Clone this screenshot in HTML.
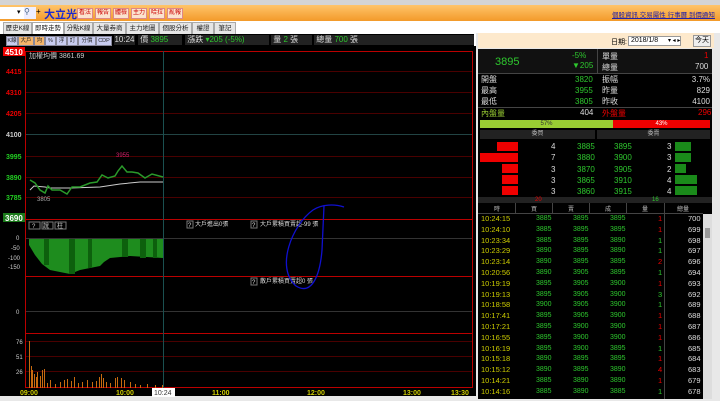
<!DOCTYPE html>
<html><head><meta charset="utf-8"><style>
*{margin:0;padding:0;box-sizing:border-box}
body{width:720px;height:401px;overflow:hidden;background:#fff;font-family:"Liberation Sans","Noto Sans CJK TC",sans-serif;font-size:8px;position:relative}
.a{position:absolute;white-space:nowrap}
.btn{position:absolute;top:8px;height:11px;width:16px;background:#fbe3cf;border:1px solid #d88;color:#c00;font-size:6px;text-align:center;line-height:9px;overflow:hidden}
.tab{position:absolute;top:22px;height:13px;background:#e6e6e6;border:1px solid #aaa;font-size:6.5px;text-align:center;line-height:11px;color:#222;overflow:hidden}
.tb{position:absolute;top:36px;height:10px;background:#c8ccf0;border:1px solid #889;font-size:5.5px;line-height:8px;text-align:center;color:#222;overflow:hidden}
.g{color:#2ec82e}.r{color:#e00}.w{color:#ddd}.y{color:#cccc00}
</style></head><body>
<div class="a" style="left:0;top:0;width:720px;height:5px;background:#d4d4d4"></div>
<div class="a" style="left:0;top:5px;width:720px;height:16px;background:linear-gradient(#ffc46a,#f39a2a)"></div>
<div class="a" style="left:0;top:7px;width:24px;height:12px;background:#fff"></div>
<div class="a" style="left:17px;top:8px;font-size:7px">▾</div>
<div class="a" style="left:24px;top:7px;width:12px;height:12px;background:#eef;color:#468;font-size:8px">⚲</div>
<div class="a" style="left:36px;top:7px;font-size:8px">+</div>
<div class="a" style="left:44px;top:6px;font-size:11px;font-weight:bold;color:#1a2ad0">大立光</div>
<div class="btn" style="left:77px">看法</div><div class="btn" style="left:95px">報告</div><div class="btn" style="left:113px">體檢</div><div class="btn" style="left:131px">主力</div><div class="btn" style="left:149px">哈拉</div><div class="btn" style="left:167px">亂報</div>
<div class="a" style="left:612px;top:9px;font-size:6.5px;color:#22a;text-decoration:underline">個股資訊 交易屬性 行事曆 到價通知</div>
<div class="tab" style="left:3px;width:29px">歷史K線</div><div class="tab" style="left:32px;width:32px;background:#fff">即時走勢</div><div class="tab" style="left:64px;width:29px">分點K線</div><div class="tab" style="left:93px;width:33px">大量券商</div><div class="tab" style="left:126px;width:33px">主力地圖</div><div class="tab" style="left:159px;width:33px">個股分析</div><div class="tab" style="left:192px;width:22px">權證</div><div class="tab" style="left:214px;width:22px">筆記</div>
<div class="a" style="left:0;top:34px;width:474px;height:12px;background:#000"></div>
<div class="tb" style="left:6px;width:12px">K線</div><div class="tb" style="left:18px;width:16px;background:#f5b56a">大戶</div><div class="tb" style="left:34px;width:11px;background:#f5b56a">均</div><div class="tb" style="left:45px;width:11px">%</div><div class="tb" style="left:56px;width:11px">浮</div><div class="tb" style="left:67px;width:11px">訂</div><div class="tb" style="left:78px;width:18px">分價</div><div class="tb" style="left:96px;width:16px">CDP</div>
<div class="a" style="left:114px;top:35px;width:21px;height:10px;background:#222;color:#ddd;font-size:8px;line-height:10px;text-align:center">10:24</div>
<div class="a" style="left:138px;top:35px;width:44px;height:10px;background:#222;color:#ddd;font-size:8px;line-height:10px">&nbsp;價 <span class="g">3895</span></div>
<div class="a" style="left:185px;top:35px;width:84px;height:10px;background:#222;color:#ddd;font-size:8px;line-height:10px">&nbsp;漲跌 <span class="g">▾205 (-5%)</span></div>
<div class="a" style="left:271px;top:35px;width:41px;height:10px;background:#222;color:#ddd;font-size:8px;line-height:10px">&nbsp;量 <span class="g">2</span> 張</div>
<div class="a" style="left:314px;top:35px;width:160px;height:10px;background:#222;color:#ddd;font-size:8px;line-height:10px">&nbsp;總量 <span class="g">700</span> 張</div>
<svg class="a" style="left:0;top:46px" width="476" height="355" viewBox="0 46 476 355">
<rect x="0" y="46" width="476" height="355" fill="#000"/>
<rect x="0" y="396" width="476" height="5" fill="#e8e8e8"/>
<g stroke="#4a0000" stroke-width="1"><line x1="25" y1="71.5" x2="473" y2="71.5"/><line x1="25" y1="92.5" x2="473" y2="92.5"/><line x1="25" y1="113.5" x2="473" y2="113.5"/><line x1="25" y1="156.5" x2="473" y2="156.5"/><line x1="25" y1="177.5" x2="473" y2="177.5"/><line x1="25" y1="197.5" x2="473" y2="197.5"/><line x1="25" y1="341.5" x2="473" y2="341.5"/><line x1="25" y1="356.5" x2="473" y2="356.5"/><line x1="25" y1="371.5" x2="473" y2="371.5"/></g>
<line x1="25" y1="134.5" x2="473" y2="134.5" stroke="#244" />
<line x1="25" y1="238.5" x2="473" y2="238.5" stroke="#333"/>
<line x1="25" y1="311.5" x2="473" y2="311.5" stroke="#333"/>
<g stroke="#b00" fill="none"><rect x="25.5" y="51.5" width="447" height="336"/><line x1="25" y1="219.5" x2="473" y2="219.5"/><line x1="25" y1="276.5" x2="473" y2="276.5"/><line x1="25" y1="333.5" x2="473" y2="333.5"/></g>
<line x1="163.5" y1="51" x2="163.5" y2="388" stroke="#1a5050"/>
<rect x="3" y="47" width="22" height="9" fill="#e00"/><text x="5" y="55" fill="#fff" font-size="8" font-weight="bold">4510</text>
<g font-size="7" font-weight="bold" fill="#e00"><text x="6" y="74">4415</text><text x="6" y="95">4310</text><text x="6" y="116">4205</text></g>
<text x="6" y="137" font-size="7" font-weight="bold" fill="#ccc">4100</text>
<g font-size="7" font-weight="bold" fill="#2c2"><text x="6" y="159">3995</text><text x="6" y="180">3890</text><text x="6" y="200">3785</text></g>
<rect x="3" y="213" width="22" height="9" fill="#1a7a1a"/><text x="5" y="221" fill="#fff" font-size="8" font-weight="bold">3690</text>
<text x="29" y="58" fill="#ccc" font-size="7">加權均價 3861.69</text>
<text x="116" y="157" fill="#d0206a" font-size="6">3955</text><text x="37" y="201" fill="#aaa" font-size="6">3805</text>
<polyline fill="none" stroke="#ccc" stroke-width="1" points="30,190 34,186 45,187 50,188 70,188 100,187 120,184 140,182 163,182"/>
<polyline fill="none" stroke="#2a9a2a" stroke-width="1.5" points="30,180 35,183 40,190 45,193 48,186 52,190 60,190 67,194 72,187 80,187 90,183 97,182 102,175 108,178 115,176 118,171 122,166 127,172 132,172 138,173 145,178 152,174 163,177"/>
<g fill="#000" stroke="#777"><rect x="29" y="222" width="11" height="7"/><rect x="42" y="222" width="11" height="7"/><rect x="55" y="222" width="11" height="7"/></g>
<g font-size="6" fill="#ccc"><text x="32" y="228">?</text><text x="43" y="228">說</text><text x="57" y="228">柱</text></g>
<g font-size="6" fill="#ccc"><text x="16" y="240">0</text><text x="11" y="250">-50</text><text x="8" y="260">-100</text><text x="8" y="269">-150</text><text x="16" y="314">0</text><text x="16" y="344">76</text><text x="16" y="359">51</text><text x="16" y="374">26</text></g>
<path d="M29,239 L29,245 L35,255 L42,264 L50,270 L60,272 L70,274 L80,270 L100,266 L104,262 L110,258 L130,256 L163,258 L163,239Z" fill="#1e8c1e"/>
<g fill="#0d600d"><rect x="44" y="239" width="5" height="26"/><rect x="69" y="239" width="6" height="35"/><rect x="88" y="239" width="4" height="29"/><rect x="122" y="239" width="6" height="18"/><rect x="140" y="239" width="6" height="19"/><rect x="153" y="239" width="4" height="19"/></g>
<g fill="#000" stroke="#777"><rect x="187" y="221" width="6" height="7"/><rect x="251" y="221" width="6" height="7"/><rect x="251" y="278" width="6" height="7"/></g>
<g font-size="6" fill="#ddd"><text x="188" y="227">?</text><text x="252" y="227">?</text><text x="252" y="284">?</text><text x="195" y="226">大戶進出0張</text><text x="260" y="226">大戶累積買賣超-99 張</text><text x="260" y="283">散戶累積買賣超0 張</text></g>
<path d="M344,207 C335,204 322,204 313,210 C292,225 275,268 296,286 C312,296 320,275 322,250 L324,206" fill="none" stroke="#1010d0" stroke-width="1.3"/>
<g fill="#c86a10"><rect x="29" y="341" width="1" height="47"/><rect x="31" y="366" width="1" height="22"/><rect x="32" y="370" width="1" height="18"/><rect x="34" y="374" width="1" height="14"/><rect x="36" y="377" width="1" height="11"/><rect x="37" y="372" width="1" height="16"/><rect x="40" y="376" width="1" height="12"/><rect x="42" y="370" width="1" height="18"/><rect x="44" y="369" width="1" height="19"/><rect x="47" y="383" width="1" height="5"/><rect x="50" y="380" width="1" height="8"/><rect x="55" y="384" width="1" height="4"/><rect x="60" y="382" width="1" height="6"/><rect x="64" y="380" width="1" height="8"/><rect x="67" y="379" width="1" height="9"/><rect x="71" y="381" width="1" height="7"/><rect x="74" y="377" width="1" height="11"/><rect x="78" y="383" width="1" height="5"/><rect x="82" y="382" width="1" height="6"/><rect x="87" y="380" width="1" height="8"/><rect x="92" y="382" width="1" height="6"/><rect x="96" y="381" width="1" height="7"/><rect x="99" y="377" width="1" height="11"/><rect x="101" y="374" width="1" height="14"/><rect x="103" y="378" width="1" height="10"/><rect x="106" y="382" width="1" height="6"/><rect x="110" y="383" width="1" height="5"/><rect x="115" y="378" width="1" height="10"/><rect x="117" y="377" width="1" height="11"/><rect x="121" y="378" width="1" height="10"/><rect x="124" y="380" width="1" height="8"/><rect x="130" y="382" width="1" height="6"/><rect x="135" y="384" width="1" height="4"/><rect x="140" y="385" width="1" height="3"/><rect x="147" y="384" width="1" height="4"/><rect x="155" y="385" width="1" height="3"/><rect x="162" y="385" width="1" height="3"/></g>
<g font-size="7" font-weight="bold" fill="#cccc00"><text x="20" y="395">09:00</text><text x="116" y="395">10:00</text><text x="212" y="395">11:00</text><text x="307" y="395">12:00</text><text x="403" y="395">13:00</text><text x="451" y="395">13:30</text></g>
<rect x="152" y="388" width="23" height="9" fill="#fff"/><text x="154" y="395" font-size="7" fill="#333">10:24</text>
</svg>
<div class="a" style="left:476px;top:33px;width:244px;height:368px;background:#e8e8e8"></div>
<div class="a" style="left:478px;top:33px;width:236px;height:15px;background:#fde9cc"></div>
<div class="a" style="left:611px;top:37px;font-size:7px">日期:</div>
<div class="a" style="left:628px;top:36px;width:53px;height:10px;background:#fff;border:1px solid #999;font-size:7px;line-height:8px">&nbsp;2018/1/8</div>
<div class="a" style="left:668px;top:37px;font-size:6px">▾ ◂ ▸</div>
<div class="a" style="left:693px;top:35px;width:18px;height:12px;background:#eee;border:1px solid #999;font-size:7px;line-height:10px;text-align:center">今天</div>
<div class="a" style="left:478px;top:49px;width:234px;height:350px;background:#000;font-size:8px">
 <div class="a" style="left:0;top:0;width:234px;height:24px;background:#111"></div>
 <div class="a g" style="left:17px;top:7px;font-size:11px">3895</div>
 <div class="a g" style="left:94px;top:2px">-5%</div><div class="a g" style="left:94px;top:12px">▼205</div>
 <div class="a" style="left:119px;top:0;width:1px;height:24px;background:#444"></div>
 <div class="a w" style="left:124px;top:2px">單量</div><div class="a r" style="left:226px;top:2px">1</div>
 <div class="a w" style="left:124px;top:13px">總量</div><div class="a w" style="left:217px;top:13px">700</div>
 <div class="a" style="left:0;top:24px;width:234px;height:1px;background:#444"></div>
 <div class="a w" style="left:3px;top:25px;line-height:11px">開盤<br>最高<br>最低</div>
 <div class="a g" style="left:97px;top:25px;line-height:11px">3820<br>3955<br>3805</div>
 <div class="a w" style="left:124px;top:25px;line-height:11px">振幅<br>昨量<br>昨收</div>
 <div class="a w" style="left:209px;top:25px;line-height:11px;text-align:right;width:23px">3.7%<br>829<br>4100</div>
 <div class="a" style="left:0;top:58px;width:234px;height:1px;background:#444"></div>
 <div class="a" style="left:3px;top:59px;color:#9c3">內盤量</div><div class="a w" style="left:102px;top:59px">404</div>
 <div class="a r" style="left:124px;top:59px">外盤量</div><div class="a r" style="left:220px;top:59px">296</div>
 <div class="a" style="left:2px;top:71px;width:133px;height:8px;background:#9c3;font-size:6px;text-align:center;line-height:8px;color:#333">57%</div>
 <div class="a" style="left:135px;top:71px;width:97px;height:8px;background:#e00;font-size:6px;text-align:center;line-height:8px;color:#fff">43%</div>
 <div class="a" style="left:2px;top:81px;width:115px;height:9px;background:#222;font-size:6px;color:#bbb;text-align:center;line-height:9px">委買</div>
 <div class="a" style="left:119px;top:81px;width:113px;height:9px;background:#222;font-size:6px;color:#bbb;text-align:center;line-height:9px">委賣</div>
 <div class="a" style="left:19px;top:93px;width:21px;height:9px;background:#e00"></div>
 <div class="a" style="left:2px;top:104px;width:38px;height:9px;background:#e00"></div>
 <div class="a" style="left:24px;top:115px;width:16px;height:9px;background:#e00"></div>
 <div class="a" style="left:24px;top:126px;width:16px;height:9px;background:#e00"></div>
 <div class="a" style="left:24px;top:137px;width:16px;height:9px;background:#e00"></div>
 <div class="a" style="left:197px;top:93px;width:16px;height:9px;background:#1a8a1a"></div>
 <div class="a" style="left:197px;top:104px;width:16px;height:9px;background:#1a8a1a"></div>
 <div class="a" style="left:197px;top:115px;width:11px;height:9px;background:#1a8a1a"></div>
 <div class="a" style="left:197px;top:126px;width:22px;height:9px;background:#1a8a1a"></div>
 <div class="a" style="left:197px;top:137px;width:22px;height:9px;background:#1a8a1a"></div>
 <div class="a w" style="left:73px;top:92px;line-height:11.3px">4<br>7<br>3<br>3<br>3</div>
 <div class="a g" style="left:99px;top:92px;line-height:11.3px">3885<br>3880<br>3870<br>3865<br>3860</div>
 <div class="a g" style="left:136px;top:92px;line-height:11.3px">3895<br>3900<br>3905<br>3910<br>3915</div>
 <div class="a w" style="left:189px;top:92px;line-height:11.3px">3<br>3<br>2<br>4<br>4</div>
 <div class="a" style="left:0;top:148px;width:234px;height:9px;background:#222"></div>
 <div class="a r" style="left:57px;top:148px;font-size:6px">20</div><div class="a g" style="left:174px;top:148px;font-size:6px">16</div>
</div>
<div class="a" style="left:478px;top:203px;width:234px;height:196px;background:#000"></div>
<svg class="a" style="left:478px;top:203px" width="234" height="196">
<g stroke="#444"><line x1="37.5" y1="0" x2="37.5" y2="10"/><line x1="74.5" y1="0" x2="74.5" y2="10"/><line x1="111.5" y1="0" x2="111.5" y2="10"/><line x1="148.5" y1="0" x2="148.5" y2="10"/><line x1="186.5" y1="0" x2="186.5" y2="196"/><line x1="0" y1="10.5" x2="225" y2="10.5"/></g>
<rect x="225" y="11" width="9" height="185" fill="#ddd"/><rect x="227" y="25" width="5" height="10" fill="#999"/>
<g font-size="6" fill="#bbb" text-anchor="middle"><text x="19" y="8">時</text><text x="56" y="8">買</text><text x="93" y="8">賣</text><text x="130" y="8">成</text><text x="167" y="8">量</text><text x="205" y="8">總量</text></g>
</svg>
<div class="a y" style="left:481px;top:214px;line-height:10.8px;font-size:7.5px">10:24:15<br>10:24:10<br>10:23:34<br>10:23:29<br>10:23:14<br>10:20:56<br>10:19:19<br>10:19:13<br>10:18:58<br>10:17:41<br>10:17:21<br>10:16:55<br>10:16:19<br>10:15:18<br>10:15:12<br>10:14:21<br>10:14:16</div>
<div class="a g" style="left:536px;top:214px;line-height:10.8px;font-size:7px">3885<br>3885<br>3885<br>3890<br>3890<br>3890<br>3895<br>3895<br>3900<br>3895<br>3895<br>3895<br>3895<br>3890<br>3890<br>3885<br>3885</div>
<div class="a g" style="left:573px;top:214px;line-height:10.8px;font-size:7px">3895<br>3895<br>3895<br>3895<br>3895<br>3905<br>3905<br>3905<br>3905<br>3905<br>3900<br>3900<br>3900<br>3895<br>3895<br>3890<br>3890</div>
<div class="a g" style="left:610px;top:214px;line-height:10.8px;font-size:7px">3895<br>3895<br>3890<br>3890<br>3895<br>3895<br>3900<br>3900<br>3900<br>3900<br>3900<br>3900<br>3895<br>3895<br>3890<br>3890<br>3885</div>
<div class="a" style="left:658px;top:214px;line-height:10.8px;font-size:7.5px"><span class="r">1</span><br><span class="r">1</span><br><span class="g">1</span><br><span class="g">1</span><br><span class="r">2</span><br><span class="g">1</span><br><span class="r">1</span><br><span class="g">3</span><br><span class="g">1</span><br><span class="r">1</span><br><span class="r">1</span><br><span class="r">1</span><br><span class="g">1</span><br><span class="r">1</span><br><span class="r">4</span><br><span class="r">1</span><br><span class="g">1</span></div>
<div class="a w" style="left:688px;top:214px;line-height:10.8px;font-size:7.5px">700<br>699<br>698<br>697<br>696<br>694<br>693<br>692<br>689<br>688<br>687<br>686<br>685<br>684<br>683<br>679<br>678</div>
</body></html>
